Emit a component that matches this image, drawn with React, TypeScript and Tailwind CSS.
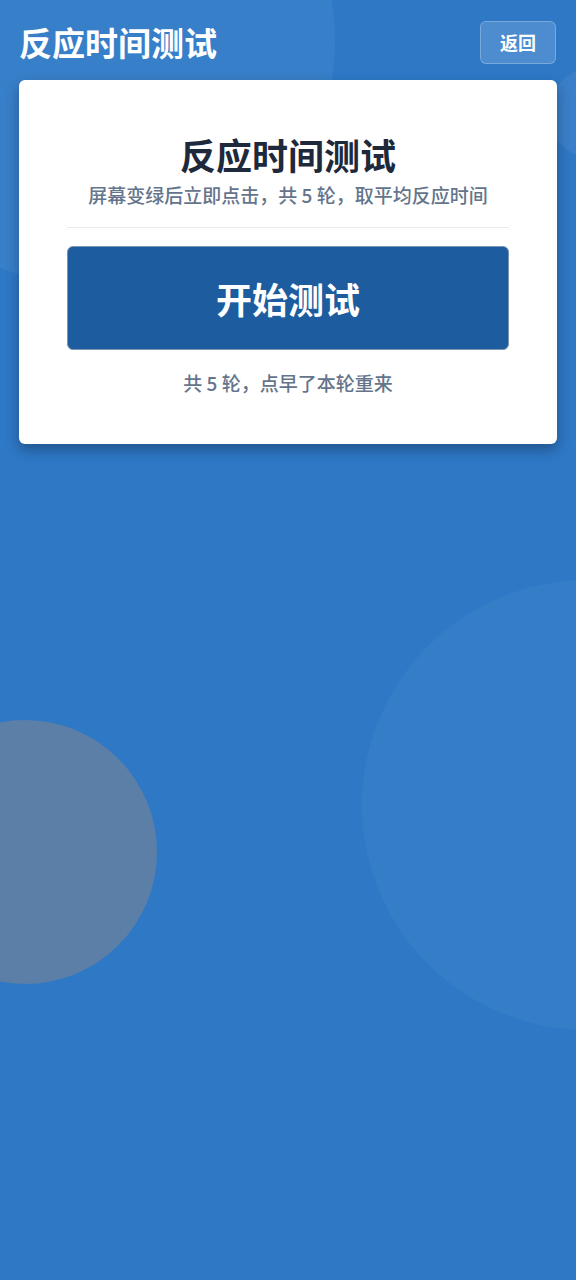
import React from 'react';

const font = { fontFamily: '"Noto Sans CJK SC", "Noto Sans", sans-serif' };

export default function App() {
  return (
    <div className="relative min-h-[1280px] w-full overflow-hidden bg-[#2e78c6]" style={font}>
      {/* background blobs */}
      <div className="pointer-events-none absolute left-[-155px] top-[-205px] h-[490px] w-[490px] rounded-full bg-white/[0.05]" />
      <div className="pointer-events-none absolute left-[548px] top-[68px] h-[90px] w-[90px] rounded-full bg-white/[0.06]" />
      <div className="pointer-events-none absolute left-[362px] top-[580px] h-[450px] w-[450px] rounded-full bg-white/[0.04]" />
      <div className="pointer-events-none absolute left-[-107px] top-[720px] h-[264px] w-[264px] rounded-full bg-[#5b7fa7]" />

      <div className="relative flex flex-col px-[19px] pt-5">
        <header className="flex items-center justify-between">
          <h1 className="text-[33px] font-semibold leading-[44px] text-white">反应时间测试</h1>
          <button className="mr-[1px] h-[43px] w-[76px] rounded-md border border-white/25 bg-white/15 text-[18px] font-semibold text-white">
            返回
          </button>
        </header>

        <main className="mt-[16px] rounded-md bg-white px-12 pb-[48px] pt-[52px] shadow-[0_6px_14px_rgba(0,0,0,0.3)]">
          <div className="text-center">
            <h2 className="text-[36px] font-semibold leading-[44px] text-[#1e293b]">反应时间测试</h2>
            <p className="mt-[6px] text-[19px] font-medium leading-[26px] text-[#64748b]">
              屏幕变绿后立即点击，共 5 轮，取平均反应时间
            </p>
          </div>
          <div className="mt-[19px] h-px bg-[#e8eaee]" />
          <button className="mt-[18px] flex h-[104px] w-full items-center justify-center rounded-md border border-[#7d94ad] bg-[#1d5c9e] text-[36px] font-semibold text-white">
            开始测试
          </button>
          <p className="mt-[20px] text-center text-[19px] font-medium leading-[26px] text-[#64748b]">
            共 5 轮，点早了本轮重来
          </p>
        </main>
      </div>
    </div>
  );
}
